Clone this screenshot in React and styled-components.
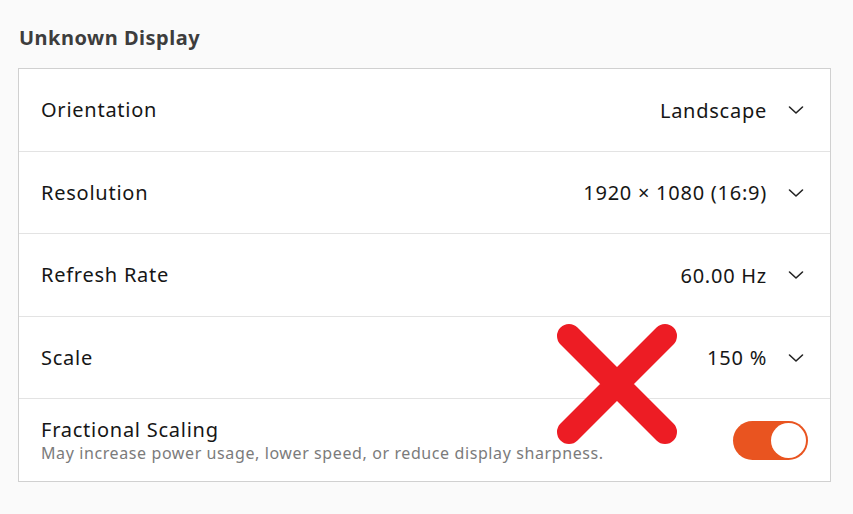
import React from "react";
import styled, { createGlobalStyle } from "styled-components";

const GlobalStyle = createGlobalStyle`
  html, body {
    margin: 0;
    padding: 0;
    background: #fafafa;
    font-family: "Noto Sans", "DejaVu Sans", sans-serif;
  }
`;

const Page = styled.div`
  position: relative;
  width: 853px;
  height: 514px;
  box-sizing: border-box;
  padding: 24px 22px 0 18px;
  background: #fafafa;
`;

const Heading = styled.h2`
  margin: 0 0 16px 1px;
  font-size: 20px;
  font-weight: 700;
  letter-spacing: 0.5px;
  color: #3d3d3d;
  line-height: 28px;
`;

const Card = styled.div`
  width: 813px;
  box-sizing: border-box;
  background: #fff;
  border: 1px solid #d0d0d0;
`;

const Row = styled.div`
  display: flex;
  align-items: center;
  height: ${(p) => p.h}px;
  padding: 0 26px 0 22px;
  border-bottom: ${(p) => (p.last ? "none" : "1px solid #e3e3e3")};
`;

const Label = styled.div`
  flex: 1;
  display: flex;
  flex-direction: column;
`;

const Title = styled.span`
  font-size: 20px;
  letter-spacing: 0.75px;
  color: #161616;
  line-height: 26px;
`;

const Subtitle = styled.span`
  font-size: 16px;
  letter-spacing: 0.6px;
  color: #7b7b7b;
  line-height: 20px;
`;

const Value = styled.span`
  font-size: 20px;
  letter-spacing: 0.75px;
  color: #161616;
  margin-right: 21px;
`;

const Chevron = () => (
  <svg width="16" height="10" viewBox="0 0 16 10">
    <path d="M1.5 2 L8 8 L14.5 2" fill="none" stroke="#222" strokeWidth="1.6" strokeLinecap="round" strokeLinejoin="round" />
  </svg>
);

const Switch = styled.div`
  width: 75px;
  height: 39px;
  border-radius: 20px;
  background: #e95420;
  display: flex;
  align-items: center;
  justify-content: flex-end;
  padding: 2px;
  box-sizing: border-box;
  margin-right: -4px;
`;

const Knob = styled.div`
  width: 35px;
  height: 35px;
  border-radius: 50%;
  background: #fff;
`;

const Cross = styled.svg`
  position: absolute;
  left: 555px;
  top: 322px;
`;

const rows = [
  { title: "Orientation", value: "Landscape", h: 82 },
  { title: "Resolution", value: "1920 × 1080 (16:9)", h: 81 },
  { title: "Refresh Rate", value: "60.00 Hz", h: 82 },
  { title: "Scale", value: "150 %", h: 81 },
];

export default function App() {
  return (
    <Page>
      <GlobalStyle />
      <Heading>Unknown Display</Heading>
      <Card>
        {rows.map((r) => (
          <Row key={r.title} h={r.h}>
            <Label>
              <Title>{r.title}</Title>
            </Label>
            <Value>{r.value}</Value>
            <Chevron />
          </Row>
        ))}
        <Row last h={82}>
          <Label>
            <Title>Fractional Scaling</Title>
            <Subtitle>May increase power usage, lower speed, or reduce display sharpness.</Subtitle>
          </Label>
          <Switch>
            <Knob />
          </Switch>
        </Row>
      </Card>
      <Cross width="124" height="124" viewBox="0 0 124 124">
        <path d="M14 14 L110 110 M110 14 L14 110" stroke="#ed1c24" strokeWidth="24" strokeLinecap="round" />
      </Cross>
    </Page>
  );
}
